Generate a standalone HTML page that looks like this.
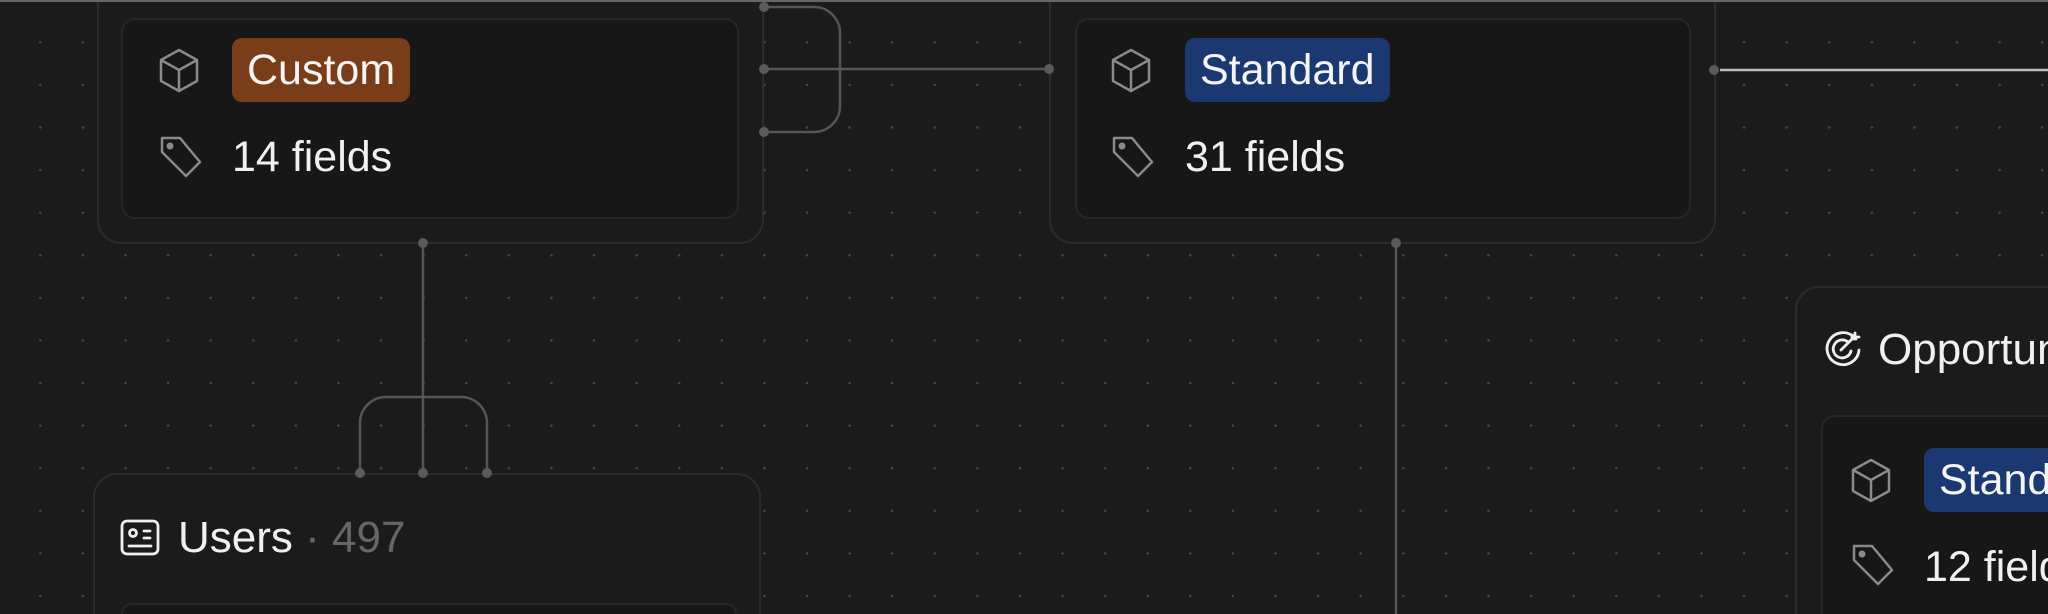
<!DOCTYPE html>
<html><head><meta charset="utf-8"><style>
html,body{margin:0;padding:0;width:2048px;height:614px;overflow:hidden;}
body{position:relative;background:#1b1b1b;
background-image:radial-gradient(circle,#4a4a4a 1.1px,transparent 1.4px);background-size:42.6px 42.6px;background-position:19px 21px;
font-family:"Liberation Sans",sans-serif;color:#f0f0f0;}
.o{position:absolute;background:#1b1b1b;border:2px solid #2c2c2c;border-radius:24px;box-sizing:border-box;}
.i{position:absolute;background:#171717;border:2px solid #262626;border-radius:14px;box-sizing:border-box;}
.cut{border-bottom:none;border-bottom-left-radius:0;border-bottom-right-radius:0;}
.cutr{border-right:none;border-top-right-radius:0;}
.cutt{border-top:none;border-top-left-radius:0;border-top-right-radius:0;}
.badge{position:absolute;height:64px;line-height:64px;border-radius:10px;padding:0 15px;font-size:43px;color:#f4f4f4;}
.t{position:absolute;font-size:43px;line-height:48px;white-space:nowrap;}
</style></head><body>

<div class="o cutt" style="left:97px;top:0;width:667px;height:244px"></div>
<div class="i" style="left:121px;top:18px;width:618px;height:201px"></div>
<div class="badge" style="left:232px;top:38px;background:#7a3d1a">Custom</div>
<div class="t" style="left:232px;top:133px">14 fields</div>

<div class="o cutt" style="left:1049px;top:0;width:667px;height:244px"></div>
<div class="i" style="left:1075px;top:18px;width:616px;height:201px"></div>
<div class="badge" style="left:1185px;top:38px;background:#1c3870">Standard</div>
<div class="t" style="left:1185px;top:133px">31 fields</div>

<div class="o cut" style="left:93px;top:473px;width:668px;height:141px"></div>
<div class="i cut" style="left:121px;top:603px;width:616px;height:11px"></div>
<div class="t" style="left:178px;top:514px;font-size:44px">Users <span style="color:#666">· 497</span></div>

<div class="o cut cutr" style="left:1795px;top:286px;width:253px;height:328px"></div>
<div class="i cut cutr" style="left:1821px;top:415px;width:227px;height:199px"></div>
<div class="t" style="left:1878px;top:326px;font-size:44px">Opportunity</div>
<div class="badge" style="left:1924px;top:448px;background:#1c3870">Standard</div>
<div class="t" style="left:1924px;top:543px">12 fields</div>

<svg width="2048" height="614" style="position:absolute;left:0;top:0" fill="none">
<path d="M0 1 H2048" stroke="#666" stroke-width="2"/>
<g stroke="#555" stroke-width="2.5">
<path d="M764 7 H814 A26 26 0 0 1 840 33 V106 A26 26 0 0 1 814 132 H764"/>
<path d="M764 69 H1049"/>
<path d="M423 243 V473"/>
<path d="M360 473 V423 A26 26 0 0 1 386 397 H461 A26 26 0 0 1 487 423 V473"/>
<path d="M1396 243 V614"/>
</g>
<path d="M1720 70 H2048" stroke="#bbb" stroke-width="2.5"/>
<g fill="#5a5a5a">
<circle cx="764" cy="7" r="5"/><circle cx="764" cy="69" r="5"/><circle cx="764" cy="132" r="5"/>
<circle cx="1049" cy="69" r="5"/><circle cx="1714" cy="70" r="5"/>
<circle cx="423" cy="243" r="5"/><circle cx="1396" cy="243" r="5"/>
<circle cx="360" cy="473" r="5"/><circle cx="423" cy="473" r="5"/><circle cx="487" cy="473" r="5"/>
</g>
<g stroke="#8a8a8a" stroke-width="2.5" stroke-linejoin="round">
<path d="M179 50 L197 60 V81 L179 91 L161 81 V60 Z M161 60 L179 70 L197 60 M179 70 V91"/>
<path d="M1131 50 L1149 60 V81 L1131 91 L1113 81 V60 Z M1113 60 L1131 70 L1149 60 M1131 70 V91"/>
<path d="M1871 460 L1889 470 V491 L1871 501 L1853 491 V470 Z M1853 470 L1871 480 L1889 470 M1871 480 V501"/>
</g>
<g stroke="#8a8a8a" stroke-width="2.5" stroke-linejoin="round">
<path d="M162 138 H180 L200 162 L186 176 L162 152 Z"/><circle cx="170" cy="146" r="2.2" fill="#8a8a8a"/>
<path d="M1114 138 H1132 L1152 162 L1138 176 L1114 152 Z"/><circle cx="1122" cy="146" r="2.2" fill="#8a8a8a"/>
<path d="M1854 546 H1872 L1892 570 L1878 584 L1854 560 Z"/><circle cx="1862" cy="554" r="2.2" fill="#8a8a8a"/>
</g>
<g stroke="#eee" stroke-width="2.8" stroke-linecap="round">
<rect x="122" y="521" width="36" height="33" rx="5"/>
<circle cx="133" cy="533" r="3.5"/><path d="M144 531 H150 M144 538 H150 M129 546 H151"/>
</g>
<g stroke="#eee" stroke-width="2.8" stroke-linecap="round">
<path d="M1855 338 A16 16 0 1 0 1859 350"/>
<path d="M1848 342 A9 9 0 1 0 1851 351"/>
<path d="M1841 350 L1855 336 M1852 335 V339 H1856 M1855 333 V337 H1859"/>
</g>
</svg>
</body></html>
